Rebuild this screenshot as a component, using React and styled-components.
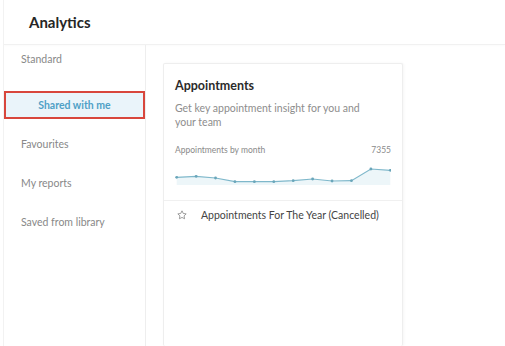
import React from 'react'
import styled, { createGlobalStyle } from 'styled-components'

const GlobalStyle = createGlobalStyle`
  html, body { margin: 0; padding: 0; background: #fff; }
  body { font-family: Lato, "Liberation Sans", sans-serif; }
`

const menu = [
  { name: 'Standard', section: true },
  { name: 'Shared with me', active: true },
  { name: 'Favourites' },
  { name: 'My reports' },
  { name: 'Saved from library' }
]

const points = [17.3, 16.3, 18, 21.7, 21.7, 21.7, 20.7, 19, 21, 20.7, 9, 10.3]

function Sparkline() {
  const step = 213.6 / (points.length - 1)
  const xy = points.map((y, i) => [1.7 + i * step, y])
  const line = xy.map(([x, y]) => `${x},${y}`).join(' ')
  const area = `1.7,25 ${line} ${xy[xy.length - 1][0]},25`
  return (
    <svg width="216" height="28" viewBox="0 0 216 28">
      <polygon points={area} fill="#edf6f9" />
      <polyline points={line} fill="none" stroke="#7fb8cb" strokeWidth="1.2" />
      {xy.map(([x, y], i) => (
        <circle key={i} cx={x} cy={y} r="1.4" fill="#6aa6ba" />
      ))}
    </svg>
  )
}

export default function App() {
  return (
    <Page>
      <GlobalStyle />
      <Header>Analytics</Header>
      <Body>
        <Sidebar>
          {menu.map(({ name, section, active }) => (
            <MenuItem key={name} section={section} active={active}>{name}</MenuItem>
          ))}
        </Sidebar>
        <Content>
          <Card>
            <Title>Appointments</Title>
            <Desc>Get key appointment insight for you and your team</Desc>
            <ChartHead>
              <span>Appointments by month</span>
              <span>7355</span>
            </ChartHead>
            <Chart><Sparkline /></Chart>
            <ReportRow>
              <svg width="10" height="10" viewBox="0 0 24 24" fill="none" stroke="#8a8a8a" strokeWidth="2" strokeLinejoin="round">
                <polygon points="12 2 15.1 8.3 22 9.3 17 14.1 18.2 21 12 17.8 5.8 21 7 14.1 2 9.3 8.9 8.3 12 2" />
              </svg>
              <span>Appointments For The Year (Cancelled)</span>
            </ReportRow>
          </Card>
        </Content>
      </Body>
    </Page>
  )
}

const Page = styled.div`
  height: 100vh;
  display: flex;
  flex-direction: column;
  overflow: hidden;
  margin-left: 3px;
  border-left: 1px solid #f2f2f2;
`

const Header = styled.div`
  height: 44px;
  flex-shrink: 0;
  display: flex;
  align-items: center;
  padding-left: 25px;
  font-size: 15px;
  font-weight: 700;
  color: #262626;
  border-bottom: 1px solid #f1f1f1;
  box-shadow: 0 1px 2px rgba(0,0,0,0.02);
`

const Body = styled.div`
  flex: 1;
  display: flex;
`

const Sidebar = styled.div`
  width: 141px;
  flex-shrink: 0;
  border-right: 1px solid #eeeeee;
  display: flex;
  flex-direction: column;
  gap: 11px;
`

const MenuItem = styled.div`
  height: 28px;
  box-sizing: border-box;
  display: flex;
  align-items: center;
  font-size: 10.5px;
  color: #888;
  padding-left: 17px;
  margin-bottom: ${({ section }) => (section ? '7px' : '0')};
  ${({ active }) => active && `
    justify-content: center;
    padding-left: 0;
    background: #eaf4fa;
    border: 2px solid #d8463c;
    color: #4fa0c6;
    font-weight: 700;
  `}
`

const Content = styled.div`
  flex: 1;
  padding: 18px 0 0 17px;
`

const Card = styled.div`
  width: 240px;
  height: 100%;
  box-sizing: border-box;
  border: 1px solid #eeeeee;
  border-bottom: none;
  border-radius: 2px;
  box-shadow: 1px 0 3px rgba(0,0,0,0.04);
  display: flex;
  flex-direction: column;
`

const Title = styled.div`
  font-size: 12.5px;
  font-weight: 700;
  color: #2b2b2b;
  padding: 14px 11px 0;
`

const Desc = styled.div`
  font-size: 10.5px;
  line-height: 14px;
  color: #8d8d8d;
  padding: 8px 11px 0;
  width: 200px;
`

const ChartHead = styled.div`
  display: flex;
  justify-content: space-between;
  font-size: 8.5px;
  color: #8a8a8a;
  padding: 16px 11px 0;
`

const Chart = styled.div`
  padding: 5px 11px 12px;
  height: 28px;
  border-bottom: 1px solid #f0f0f0;
`

const ReportRow = styled.div`
  display: flex;
  align-items: center;
  gap: 14px;
  padding: 8px 0 0 13px;
  font-size: 10.5px;
  color: #444;
`
